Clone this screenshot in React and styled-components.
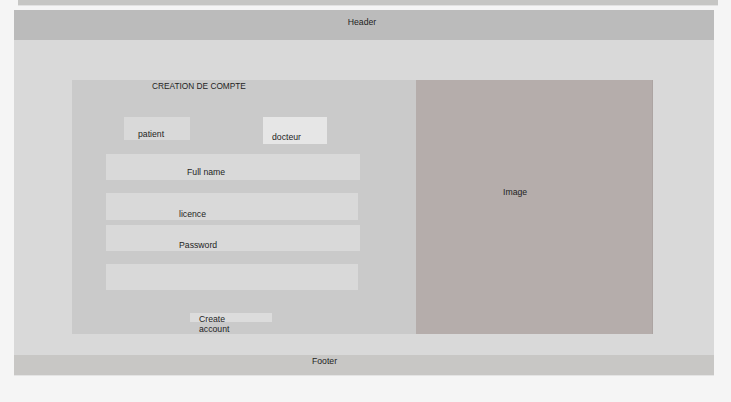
import React from 'react'
import styled, { createGlobalStyle } from 'styled-components'

const GlobalStyle = createGlobalStyle`
  html, body {
    margin: 0;
    padding: 0;
    background: #f5f5f5;
  }
  body {
    font-family: "Liberation Sans", Arial, sans-serif;
    font-size: 8.7px;
    line-height: 11px;
    color: #1e1e1e;
  }
`

const TopBar = styled.div`
  margin-left: 18px;
  width: 700px;
  height: 5px;
  background: #c6c6c4;
  border-bottom: 1px solid #e2e2e2;
`

const Frame = styled.div`
  margin: 4px 0 0 14px;
  width: 700px;
  display: flex;
  flex-flow: column;
`

const Header = styled.div`
  height: 30px;
  background: #bbbbbb;
  text-align: center;
  line-height: 25px;
  padding-right: 4px;
  box-sizing: border-box;
`

const Main = styled.div`
  height: 315px;
  background: #d9d9d9;
  padding: 40px 0 0 58px;
  box-sizing: border-box;
`

const Card = styled.div`
  display: flex;
  height: 254px;
`

const Form = styled.div`
  width: 344px;
  background: #cacaca;
  display: flex;
  flex-flow: column;
  align-items: flex-start;
`

const Title = styled.div`
  margin-left: 80px;
  padding-top: 1px;
  height: 11px;
  font-size: 8.3px;
`

const RoleRow = styled.div`
  display: flex;
  align-items: flex-start;
  margin-top: 25px;
`

const RoleButton = styled.div`
  margin-left: ${p => p.$left}px;
  width: ${p => p.$w}px;
  height: ${p => p.$h}px;
  padding: ${p => p.$top}px 0 0 ${p => p.$pad}px;
  box-sizing: border-box;
  background: ${p => p.$bg};
`

const Field = styled.div`
  margin: ${p => p.$mt}px 0 0 34px;
  width: ${p => p.$w}px;
  height: ${p => p.$h}px;
  padding: ${p => p.$top}px 0 0 ${p => p.$pad}px;
  box-sizing: border-box;
  background: #d9d9d9;
`

const SubmitButton = styled.div`
  margin: 23px 0 0 118px;
  width: 82px;
  height: 9px;
  padding-left: 9px;
  box-sizing: border-box;
  background: #dcdcdc;
  line-height: 10.5px;
  overflow: visible;
`

const SubmitLabel = styled.span`
  display: block;
  width: 40px;
  margin-top: 0.5px;
`

const ImagePanel = styled.div`
  width: 237px;
  background: #b5adab;
  border-right: 1px solid #aca4a2;
  padding: 107px 0 0 87px;
  box-sizing: border-box;
`

const Footer = styled.div`
  height: 21px;
  background: #c8c7c5;
  text-align: center;
  padding: 1px 79px 0 0;
  box-sizing: border-box;
  border-bottom: 1px solid #e4e4e4;
`

export default function App () {
  return (
    <>
      <GlobalStyle />
      <TopBar />
      <Frame>
        <Header>Header</Header>
        <Main>
          <Card>
            <Form>
              <Title>CREATION DE COMPTE</Title>
              <RoleRow>
                <RoleButton $left={52} $w={66} $h={23} $top={12} $pad={14} $bg='#d9d9d9'>patient</RoleButton>
                <RoleButton $left={73} $w={64} $h={27} $top={15} $pad={9} $bg='#e6e6e6'>docteur</RoleButton>
              </RoleRow>
              <Field $mt={10} $w={254} $h={26} $top={13} $pad={81}>Full name</Field>
              <Field $mt={13} $w={252} $h={27} $top={16} $pad={73}>licence</Field>
              <Field $mt={5} $w={254} $h={26} $top={15} $pad={73}>Password</Field>
              <Field $mt={13} $w={252} $h={26} />
              <SubmitButton><SubmitLabel>Create account</SubmitLabel></SubmitButton>
            </Form>
            <ImagePanel>Image</ImagePanel>
          </Card>
        </Main>
        <Footer>Footer</Footer>
      </Frame>
    </>
  )
}
